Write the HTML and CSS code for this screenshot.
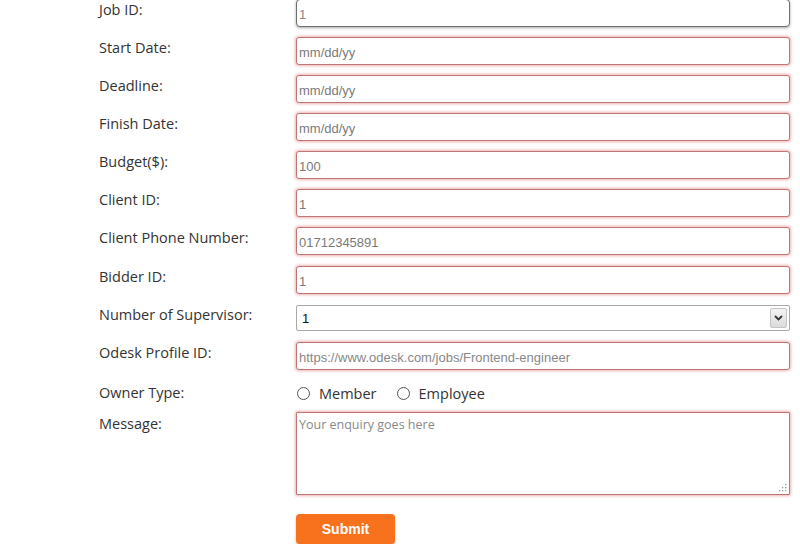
FILE: index.html
```html
<!DOCTYPE html>
<html>
<head>
<meta charset="utf-8">
<link rel="stylesheet" href="styles.css">
</head>
<body>
<form class="form">
  <label class="lbl">Job ID:</label>
  <input class="fld fld-focus" type="text" value="1">
  <label class="lbl">Start Date:</label>
  <input class="fld" type="text" placeholder="mm/dd/yy">
  <label class="lbl">Deadline:</label>
  <input class="fld" type="text" placeholder="mm/dd/yy">
  <label class="lbl">Finish Date:</label>
  <input class="fld" type="text" placeholder="mm/dd/yy">
  <label class="lbl">Budget($):</label>
  <input class="fld" type="text" placeholder="100">
  <label class="lbl">Client ID:</label>
  <input class="fld" type="text" placeholder="1">
  <label class="lbl">Client Phone Number:</label>
  <input class="fld" type="text" placeholder="01712345891">
  <label class="lbl row-shift">Bidder ID:</label>
  <input class="fld row-shift" type="text" placeholder="1">
  <label class="lbl row-shift">Number of Supervisor:</label>
  <div class="sel row-shift">
    <span class="sel-val">1</span>
    <span class="sel-btn"><svg width="9" height="6" viewBox="0 0 9 6"><path d="M1 1 L4.5 4.5 L8 1" fill="none" stroke="#333" stroke-width="1.8"/></svg></span>
  </div>
  <label class="lbl row-shift2">Odesk Profile ID:</label>
  <input class="fld fld-url row-shift2" type="text" placeholder="https://www.odesk.com/jobs/Frontend-engineer">
  <label class="lbl lbl-owner">Owner Type:</label>
  <div class="radios">
    <label class="radio"><span class="circle"></span>Member</label>
    <label class="radio"><span class="circle"></span>Employee</label>
  </div>
  <label class="lbl lbl-msg">Message:</label>
  <div class="ta-wrap">
    <textarea class="ta" placeholder="Your enquiry goes here"></textarea>
    <span class="grip"><svg width="9" height="9" viewBox="0 0 9 9"><g fill="#999"><rect x="7" y="1" width="1.3" height="1.3"/><rect x="4" y="4" width="1.3" height="1.3"/><rect x="7" y="4" width="1.3" height="1.3"/><rect x="1" y="7" width="1.3" height="1.3"/><rect x="4" y="7" width="1.3" height="1.3"/><rect x="7" y="7" width="1.3" height="1.3"/></g></svg></span>
  </div>
  <span></span>
  <div class="actions"><button class="submit" type="button">Submit</button></div>
</form>
</body>
</html>
```
FILE: styles.css
```css
html, body {
  margin: 0;
  padding: 0;
  background: #fff;
}
.form {
  display: grid;
  grid-template-columns: 197px 494px;
  row-gap: 10px;
  padding-left: 99px;
  margin-top: -1px;
  font-family: "Open Sans", "DejaVu Sans", sans-serif;
}
.lbl {
  font-size: 14.5px;
  color: #333;
  line-height: 20px;
  padding-top: 1px;
}
.row-shift { position: relative; top: 1px; }
.row-shift2 { position: relative; top: 2px; }
.fld {
  box-sizing: border-box;
  width: 494px;
  height: 28px;
  margin: 0;
  padding: 2px 2px 0;
  border: 1px solid #c07575;
  border-radius: 3px;
  box-shadow: 0 0 3px 1px #eeb4b4;
  font-family: "Liberation Sans", Arial, sans-serif;
  font-size: 13px;
  color: #777;
  outline: none;
  background: #fff;
}
.fld::placeholder {
  color: #7a7a7a;
  opacity: 1;
}
.fld-url::placeholder { color: #888; }
.fld-focus {
  border: 1px solid #6e6e6e;
  border-radius: 4px;
  box-shadow: 0 1px 3px rgba(0,0,0,0.35);
  color: #888;
}
.sel {
  box-sizing: border-box;
  width: 494px;
  height: 26px;
  margin-top: 1px;
  border: 1px solid #a9a9a9;
  border-radius: 2px;
  display: flex;
  align-items: center;
  justify-content: space-between;
  padding: 0 2px 0 5px;
  font-family: "Liberation Sans", Arial, sans-serif;
  font-size: 13px;
  color: #111;
  background: #fff;
}
.sel-btn {
  box-sizing: border-box;
  width: 17px;
  height: 20px;
  border: 1px solid #c4c4c4;
  border-radius: 2px;
  background: linear-gradient(#f4f4f4, #dcdcdc);
  display: flex;
  align-items: center;
  justify-content: center;
}
.lbl-owner { padding-top: 5px; }
.radios {
  display: flex;
  gap: 19px;
  align-items: center;
  height: 28px;
  padding-top: 2px;
  box-sizing: border-box;
}
.radio {
  display: flex;
  align-items: center;
  gap: 9px;
  font-size: 14.5px;
  color: #333;
  padding-left: 1px;
}
.circle {
  box-sizing: border-box;
  width: 13px;
  height: 13px;
  border: 1px solid #555;
  border-radius: 50%;
  background: #fff;
}
.lbl-msg { padding-top: 0; margin-top: -2px; }
.ta-wrap {
  position: relative;
  width: 494px;
  height: 83px;
  margin-top: -4px;
}
.ta {
  box-sizing: border-box;
  width: 494px;
  height: 83px;
  margin: 0;
  padding: 3px 2px;
  border: 1px solid #c07575;
  border-radius: 1px;
  box-shadow: 0 0 3px 1px #eeb4b4;
  font-family: "Open Sans", "DejaVu Sans", sans-serif;
  font-size: 12.5px;
  color: #777;
  resize: none;
  outline: none;
  display: block;
}
.ta::placeholder { color: #888; opacity: 1; }
.grip {
  position: absolute;
  right: 3px;
  bottom: 3px;
  line-height: 0;
}
.actions {
  padding-top: 9px;
}
.submit {
  width: 99px;
  height: 30px;
  border: none;
  border-radius: 4px;
  background: #f8711c;
  box-shadow: 0 1px 2px rgba(200,90,20,0.5);
  color: #fff;
  font-family: "Liberation Sans", Arial, sans-serif;
  font-weight: bold;
  font-size: 14px;
  padding: 0;
}
```
